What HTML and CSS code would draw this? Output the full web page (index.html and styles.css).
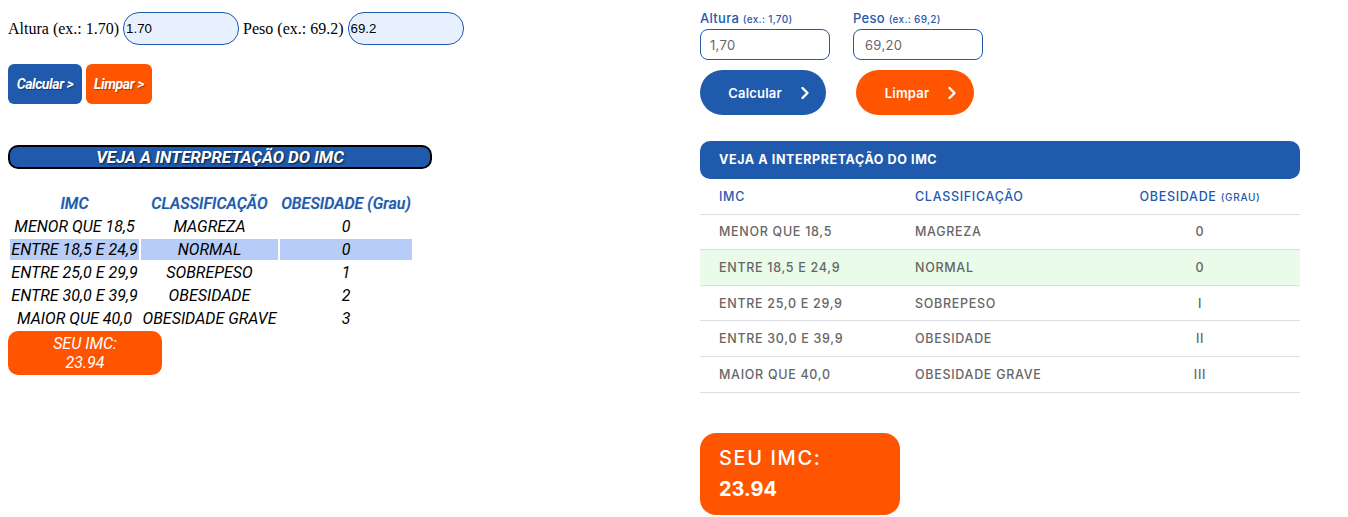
FILE: index.html
```html
<!DOCTYPE html>
<html lang="pt-BR">
<head>
<meta charset="utf-8">
<title>IMC</title>
<link rel="stylesheet" href="styles.css">
</head>
<body>
<div class="page">
  <section class="old">
    <div class="old-row">
      <span>Altura (ex.: 1.70)</span>
      <input class="old-input" type="text" value="1.70">
      <span>Peso (ex.: 69.2)</span>
      <input class="old-input" type="text" value="69.2">
    </div>
    <div class="old-buttons">
      <button class="old-btn old-btn-blue">Calcular &gt;</button>
      <button class="old-btn old-btn-orange">Limpar &gt;</button>
    </div>
    <div class="old-title">VEJA A INTERPRETAÇÃO DO IMC</div>
    <table class="old-table">
      <tr class="old-head"><td>IMC</td><td>CLASSIFICAÇÃO</td><td>OBESIDADE (Grau)</td></tr>
      <tr><td>MENOR QUE 18,5</td><td>MAGREZA</td><td>0</td></tr>
      <tr class="old-hl"><td>ENTRE 18,5 E 24,9</td><td>NORMAL</td><td>0</td></tr>
      <tr><td>ENTRE 25,0 E 29,9</td><td>SOBREPESO</td><td>1</td></tr>
      <tr><td>ENTRE 30,0 E 39,9</td><td>OBESIDADE</td><td>2</td></tr>
      <tr><td>MAIOR QUE 40,0</td><td>OBESIDADE GRAVE</td><td>3</td></tr>
    </table>
    <div class="old-result">SEU IMC:<br>23.94</div>
  </section>

  <section class="new">
    <div class="fields">
      <label class="field">
        <span class="label">Altura <small>(ex.: 1,70)</small></span>
        <input class="new-input" type="text" value="1,70">
      </label>
      <label class="field">
        <span class="label">Peso <small>(ex.: 69,2)</small></span>
        <input class="new-input new-input-peso" type="text" value="69,20">
      </label>
    </div>
    <div class="new-buttons">
      <button class="pill pill-blue">Calcular
        <svg class="chev" width="10" height="14" viewBox="0 0 10 14"><polyline points="2.5,2 7.5,7 2.5,12" fill="none" stroke="#fff" stroke-width="2.4" stroke-linecap="round" stroke-linejoin="round"/></svg>
      </button>
      <button class="pill pill-orange">Limpar
        <svg class="chev" width="10" height="14" viewBox="0 0 10 14"><polyline points="2.5,2 7.5,7 2.5,12" fill="none" stroke="#fff" stroke-width="2.4" stroke-linecap="round" stroke-linejoin="round"/></svg>
      </button>
    </div>
    <div class="new-title">VEJA A INTERPRETAÇÃO DO IMC</div>
    <div class="grid">
      <div class="grow ghead"><span>IMC</span><span>CLASSIFICAÇÃO</span><span class="c3">OBESIDADE <small>(GRAU)</small></span></div>
      <div class="grow"><span>MENOR QUE 18,5</span><span>MAGREZA</span><span class="c3">0</span></div>
      <div class="grow ghl"><span>ENTRE 18,5 E 24,9</span><span>NORMAL</span><span class="c3">0</span></div>
      <div class="grow"><span>ENTRE 25,0 E 29,9</span><span>SOBREPESO</span><span class="c3">I</span></div>
      <div class="grow"><span>ENTRE 30,0 E 39,9</span><span>OBESIDADE</span><span class="c3">II</span></div>
      <div class="grow"><span>MAIOR QUE 40,0</span><span>OBESIDADE GRAVE</span><span class="c3">III</span></div>
    </div>
    <div class="new-result"><span class="res-label">SEU IMC:</span><br><b>23.94</b></div>
  </section>
</div>
</body>
</html>
```

FILE: styles.css
```css
* { box-sizing: border-box; }
html, body { background: #fff; }
body {
  margin: 8px;
  font-family: "Liberation Serif", "Times New Roman", serif;
  font-size: 16px;
}
.page {
  display: flex;
  align-items: flex-start;
}

/* ---------- old (left) ---------- */
.old {
  width: 692px;
  flex: none;
}
.old-row {
  margin-top: 4px;
  display: flex;
  align-items: center;
  gap: 4px;
  height: 33px;
  color: #000;
}
.old-input {
  width: 116px;
  height: 33px;
  border: 1px solid #1f5aad;
  border-radius: 16px;
  background: #e8f0fe;
  font-family: "Liberation Sans", Arial, sans-serif;
  font-size: 13.33px;
  color: #000;
  padding: 0 2px;
  outline: none;
}
.old-buttons {
  margin-top: 19px;
  display: flex;
  gap: 4px;
}
.old-btn {
  height: 40px;
  border: none;
  border-radius: 6px;
  color: #fff;
  font-family: Roboto, sans-serif;
  font-style: italic;
  font-weight: 700;
  font-size: 14px;
  letter-spacing: -0.4px;
  text-shadow: 1px 1px 1px rgba(0,0,0,0.35);
  padding: 0;
}
.old-btn-blue { width: 74px; background: #1f5aad; }
.old-btn-orange { width: 66px; background: #ff5500; }
.old-title {
  margin-top: 41px;
  width: 424px;
  height: 24px;
  border: 2px solid #000;
  border-radius: 10px;
  background: #1f5aad;
  color: #fff;
  text-align: center;
  font-family: Roboto, sans-serif;
  font-style: italic;
  font-weight: 700;
  font-size: 17px;
  letter-spacing: -0.1px;
  line-height: 20px;
  text-shadow: 1px 1px 2px rgba(0,0,0,0.7);
}
.old-table {
  margin-top: 22px;
  border-spacing: 2px;
  font-family: Roboto, sans-serif;
  font-style: italic;
  font-size: 16px;
  color: #000;
}
.old-table td {
  height: 21px;
  padding: 0;
  text-align: center;
  line-height: 21px;
  white-space: nowrap;
}
.old-table td:nth-child(1) { width: 129px; }
.old-table td:nth-child(2) { width: 137px; }
.old-table td:nth-child(3) { width: 132px; }
.old-head td {
  color: #1f5aad;
  font-weight: 500;
  text-shadow: 0 0 1px rgba(31,90,173,0.5);
}
.old-hl td { background: #b7cdf7; }
.old-result {
  width: 154px;
  height: 44px;
  background: #ff5500;
  border-radius: 10px;
  color: #fff;
  text-align: center;
  font-family: Roboto, sans-serif;
  font-style: italic;
  font-size: 16px;
  line-height: 19px;
  padding-top: 3px;
}

/* ---------- new (right) ---------- */
.new {
  width: 600px;
  flex: none;
  font-family: Inter, "Noto Sans", sans-serif;
}
.fields {
  display: flex;
  gap: 23px;
  margin-top: 2px;
}
.field {
  display: flex;
  flex-direction: column;
  width: 130px;
}
.label {
  color: #1f5aad;
  font-size: 13px;
  line-height: 16px;
  font-weight: 500;
  letter-spacing: 0.3px;
}
.label small {
  font-size: 10px;
}
.new-input {
  margin-top: 2px;
  width: 130px;
  height: 31px;
  border: 1px solid #1f5aad;
  border-radius: 8px;
  background: #fff;
  color: #666;
  font-family: Inter, sans-serif;
  font-size: 13px;
  letter-spacing: 0.3px;
  padding: 0 9px;
  outline: none;
}
.new-input-peso { padding-left: 11px; }
.new-buttons {
  margin-top: 10px;
  display: flex;
  gap: 30px;
}
.pill {
  height: 45px;
  border: none;
  border-radius: 23px;
  color: #fff;
  font-family: Inter, sans-serif;
  font-weight: 600;
  font-size: 13px;
  letter-spacing: 0.2px;
  display: flex;
  align-items: center;
  justify-content: center;
  gap: 18px;
  padding: 0 0 0 12px;
}
.pill-blue { width: 126px; background: #1f5aad; }
.pill-orange { width: 118px; background: #ff5500; }
.chev { display: block; }
.new-title {
  margin-top: 26px;
  height: 38px;
  border-radius: 10px;
  background: #1f5aad;
  color: #fff;
  font-size: 12.5px;
  font-weight: 700;
  letter-spacing: 0.6px;
  line-height: 38px;
  padding-left: 19px;
}
.grid {
  display: flex;
  flex-direction: column;
}
.grow {
  display: grid;
  grid-template-columns: 196px 204px 200px;
  align-items: center;
  height: 35.6px;
  border-bottom: 1px solid #dcdce6;
  color: #666;
  font-size: 12.5px;
  font-weight: 500;
  letter-spacing: 0.7px;
}
.grow span { padding-left: 19px; }
.grow span.c3 { padding-left: 0; text-align: center; }
.ghead { color: #1f5aad; }
.ghead small { font-size: 10px; }
.ghl { background: #eafbea; }
.new-result {
  margin-top: 40px;
  width: 200px;
  height: 82px;
  border-radius: 16px;
  background: #ff5500;
  color: #fff;
  font-size: 20px;
  font-weight: 500;
  line-height: 31px;
  padding: 10px 19px;
}
.res-label { letter-spacing: 1.6px; }
.new-result b { font-weight: 700; }
```
